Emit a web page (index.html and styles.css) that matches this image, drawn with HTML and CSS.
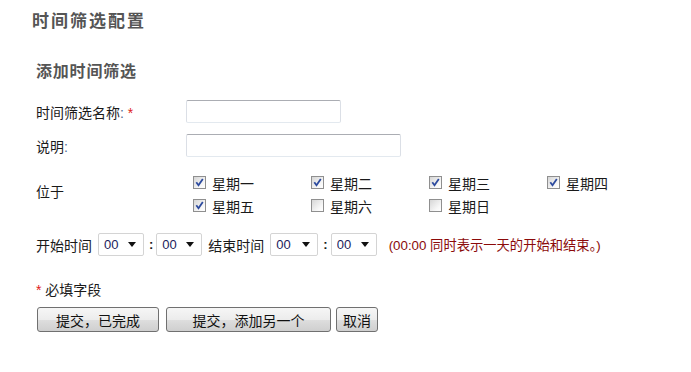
FILE: index.html
```html
<!DOCTYPE html>
<html lang="zh-CN">
<head>
    <meta charset="UTF-8">
    <title>时间筛选配置</title>
    <link rel="stylesheet" href="styles.css">
</head>
<body>
    <div class="page">
        <h1>时间筛选配置</h1>
        <h2>添加时间筛选</h2>
        <form class="form">
            <div class="row">
                <label class="label">时间筛选名称<span class="colon">:</span> <span class="req">*</span></label>
                <input type="text" class="text short">
            </div>
            <div class="row">
                <label class="label">说明<span class="colon">:</span></label>
                <input type="text" class="text long">
            </div>
            <div class="row days-row">
                <label class="label">位于</label>
                <div class="days">
                    <div class="day"><span class="cb on"><svg width="9" height="9" viewBox="0 0 9 9"><path d="M1.3 4.3 L3.5 7.2 L7.8 1" fill="none" stroke="#2c4a9e" stroke-width="1.8"/></svg></span>星期一</div>
                    <div class="day"><span class="cb on"><svg width="9" height="9" viewBox="0 0 9 9"><path d="M1.3 4.3 L3.5 7.2 L7.8 1" fill="none" stroke="#2c4a9e" stroke-width="1.8"/></svg></span>星期二</div>
                    <div class="day"><span class="cb on"><svg width="9" height="9" viewBox="0 0 9 9"><path d="M1.3 4.3 L3.5 7.2 L7.8 1" fill="none" stroke="#2c4a9e" stroke-width="1.8"/></svg></span>星期三</div>
                    <div class="day"><span class="cb on"><svg width="9" height="9" viewBox="0 0 9 9"><path d="M1.3 4.3 L3.5 7.2 L7.8 1" fill="none" stroke="#2c4a9e" stroke-width="1.8"/></svg></span>星期四</div>
                    <div class="day"><span class="cb on"><svg width="9" height="9" viewBox="0 0 9 9"><path d="M1.3 4.3 L3.5 7.2 L7.8 1" fill="none" stroke="#2c4a9e" stroke-width="1.8"/></svg></span>星期五</div>
                    <div class="day"><span class="cb"></span>星期六</div>
                    <div class="day"><span class="cb"></span>星期日</div>
                </div>
            </div>
            <div class="row time-row">
                <span>开始时间</span>
                <span class="sel"><select><option>00</option></select></span>
                <span class="sep">:</span>
                <span class="sel"><select><option>00</option></select></span>
                <span class="end-label">结束时间</span>
                <span class="sel wide"><select><option>00</option></select></span>
                <span class="sep">:</span>
                <span class="sel"><select><option>00</option></select></span>
                <span class="note">(00:00 同时表示一天的开始和结束。)</span>
            </div>
            <div class="required"><span class="req">*</span> 必填字段</div>
            <div class="buttons">
                <button type="button" class="btn b1">提交，已完成</button>
                <button type="button" class="btn b2">提交，添加另一个</button>
                <button type="button" class="btn b3">取消</button>
            </div>
        </form>
    </div>
</body>
</html>
```

FILE: styles.css
```css
body {
    margin: 0;
    background: #ffffff;
    color: #1a1a1a;
    font-family: 'Liberation Sans', 'Noto Sans CJK SC', sans-serif;
    font-size: 14px;
}
.page {
    padding: 12px 0 0 32px;
}
h1 {
    margin: 0;
    font-size: 17px;
    line-height: 20px;
    letter-spacing: 2px;
    color: #555555;
}
h2 {
    margin: 30px 0 0 4px;
    font-size: 16px;
    line-height: 20px;
    letter-spacing: 0.8px;
    color: #555555;
}
.form {
    margin: 18px 0 0 4px;
}
.row {
    display: flex;
    align-items: center;
    height: 23px;
    margin-bottom: 11px;
}
.label {
    width: 150px;
    flex: none;
}
.colon {
    color: #4e6a92;
}
.req {
    color: #e02020;
}
.text {
    box-sizing: border-box;
    height: 23px;
    border: 1px solid #dbdfe6;
    border-top-color: #abadb3;
    border-bottom-color: #e3e9ef;
    border-radius: 2px;
    padding: 0 4px;
    font-size: 13px;
}
.short { width: 155px; }
.long { width: 215px; }

.days-row {
    height: auto;
    margin-top: 14px;
    margin-bottom: 16px;
}
.days-row .label {
    margin-top: -6px;
}
.days {
    display: grid;
    grid-template-columns: repeat(4, 118px);
    grid-auto-rows: 23px;
    padding-left: 7px;
}
.day {
    display: flex;
    align-items: center;
    gap: 6px;
}
.cb {
    box-sizing: border-box;
    width: 13px;
    height: 13px;
    padding: 1px;
    border: 1px solid #8f8f8f;
    background: linear-gradient(135deg, #d6d6d6, #f7f7f7 70%, #ffffff);
}
.cb svg {
    display: block;
}

.time-row {
    margin-bottom: 24px;
}
.sel {
    position: relative;
    margin-left: 6px;
}
.sep + .sel {
    margin-left: 3px;
}
.sel select {
    appearance: none;
    box-sizing: border-box;
    width: 46px;
    height: 23px;
    border: 1px solid #d4d4d4;
    border-radius: 2px;
    background: #ffffff;
    padding: 0 0 0 5px;
    font-family: 'Liberation Sans', sans-serif;
    font-size: 13px;
    color: #1c1c5c;
}
.sel.wide select {
    width: 48px;
}
.sel::after {
    content: "";
    position: absolute;
    right: 8px;
    top: 9px;
    border-left: 4px solid transparent;
    border-right: 4px solid transparent;
    border-top: 5px solid #111111;
    pointer-events: none;
}
.sep {
    margin-left: 5px;
    font-weight: bold;
    font-size: 13px;
}
.end-label {
    margin-left: 6px;
}
.note {
    margin-left: 12px;
    font-size: 13.3px;
    color: #8b0a0a;
}

.required {
    line-height: 20px;
}
.buttons {
    display: flex;
    margin-top: 7px;
    margin-left: 1px;
}
.btn {
    box-sizing: border-box;
    height: 25px;
    padding: 0;
    border: 1px solid #707070;
    border-radius: 3px;
    background: linear-gradient(#f6f6f6 0%, #ececec 50%, #dedede 52%, #cfcfcf 100%);
    font-family: 'Liberation Sans', 'Noto Sans CJK SC', sans-serif;
    font-size: 14px;
    color: #111111;
}
.b1 { width: 122px; }
.b2 { width: 165px; margin-left: 7px; }
.b3 { width: 42px; margin-left: 5px; }
```
